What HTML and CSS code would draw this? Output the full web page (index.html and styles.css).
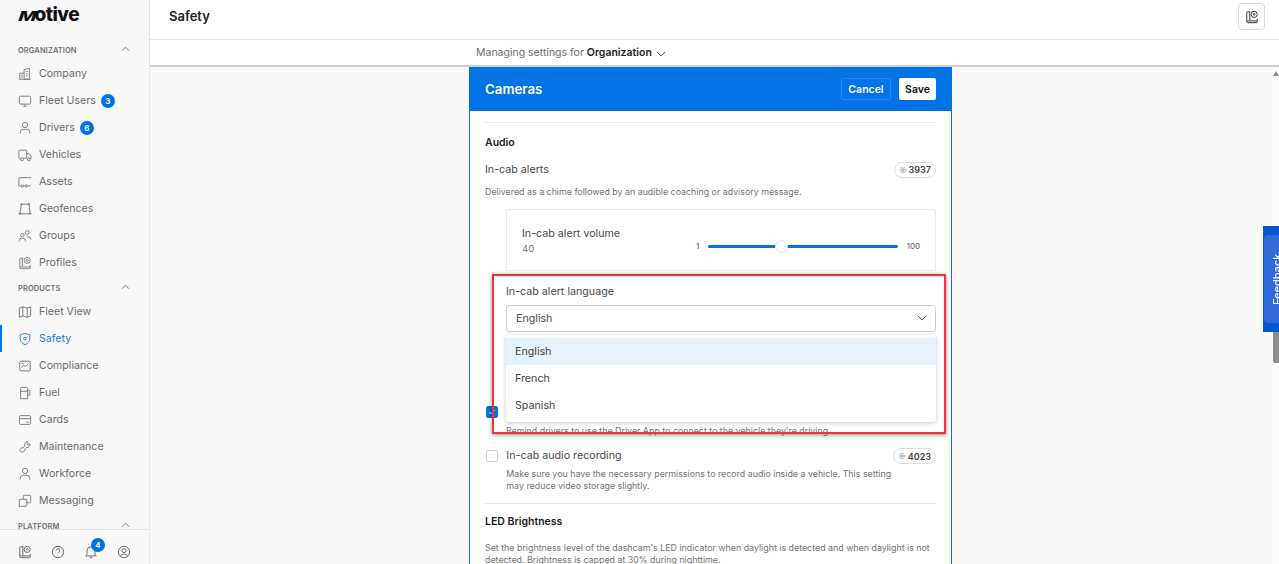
FILE: index.html
```html
<!DOCTYPE html>
<html lang="en">
<head>
<meta charset="utf-8">
<title>Safety</title>
<link rel="stylesheet" href="styles.css">
</head>
<body>
<div class="app">
  <aside class="sidebar">
    <div class="logo"><span class="logo-m">M</span>otive</div>
    <nav class="nav">
      <div class="nav-head"><span>Organization</span><svg class="chev" viewBox="0 0 10 6"><path d="M1 5l4-4 4 4"/></svg></div>
      <a class="nav-row"><svg class="ico" viewBox="0 0 16 16"><path d="M7 14V3l6-1.500V14zM2 14V7h5M1.500 14h13M9 5h2M9 7.500h2M9 10h2M3.500 9.500h2M3.500 11.500h2"/></svg>Company</a>
      <a class="nav-row"><svg class="ico" viewBox="0 0 16 16"><rect x="1.500" y="2.500" width="13" height="9" rx="1.500"/><path d="M6 14h4M8 11.500V14"/></svg>Fleet Users<span class="count">3</span></a>
      <a class="nav-row"><svg class="ico" viewBox="0 0 16 16"><circle cx="8" cy="4.500" r="3"/><path d="M2.500 14.500v-1.500a3.500 3.500 0 0 1 3.500-3.500h4a3.500 3.500 0 0 1 3.500 3.500v1.500"/></svg>Drivers<span class="count">6</span></a>
      <a class="nav-row"><svg class="ico" viewBox="0 0 16 16"><path d="M3 12.500H2a1 1 0 0 1-1-1v-8a1 1 0 0 1 1-1h7a1 1 0 0 1 1 1v8H6.500M10 6.500h2.500l2.500 3v2.500h-1M10 12.500h1"/><circle cx="4.700" cy="12.800" r="1.600"/><circle cx="12.500" cy="12.800" r="1.600"/></svg>Vehicles</a>
      <a class="nav-row"><svg class="ico" viewBox="0 0 16 16"><path d="M15 3H2a1 1 0 0 0-1 1v8.500h2M14.500 12.500H11M7.500 12.500h-1"/><circle cx="5" cy="12.500" r="1.400"/><circle cx="9.200" cy="12.500" r="1.400"/></svg>Assets</a>
      <a class="nav-row"><svg class="ico" viewBox="0 0 16 16"><path d="M4 2.500h8.500l1.500 11H2z"/><circle cx="4" cy="2.500" r=".8"/><circle cx="12.500" cy="2.500" r=".8"/><circle cx="2" cy="13.500" r=".8"/><circle cx="14" cy="13.500" r=".8"/></svg>Geofences</a>
      <a class="nav-row"><svg class="ico" viewBox="0 0 16 16"><circle cx="10.500" cy="4" r="2.200"/><circle cx="5" cy="7" r="2"/><path d="M1.500 14v-.8a2.800 2.800 0 0 1 2.800-2.700h1.400a2.800 2.800 0 0 1 2.800 2.700v.8M10 9h2a2.800 2.800 0 0 1 2.800 2.700v.5"/></svg>Groups</a>
      <a class="nav-row"><svg class="ico" viewBox="0 0 16 16"><path d="M6 2.500H3a1 1 0 0 0-1 1v10a1 1 0 0 0 1 1h10a1 1 0 0 0 1-1v-3M2.500 12.500H14M5 2.500v9"/><circle cx="10.500" cy="5" r="3.500"/><circle cx="10.500" cy="5" r="1.200"/></svg>Profiles</a>
      <div class="nav-head"><span>Products</span><svg class="chev" viewBox="0 0 10 6"><path d="M1 5l4-4 4 4"/></svg></div>
      <a class="nav-row"><svg class="ico" viewBox="0 0 16 16"><path d="M1.500 3.500l4-1.500 5 1.500 4-1.500v10.500l-4 1.500-5-1.500-4 1.500zM5.500 2v10.500M10.500 3.500V14"/></svg>Fleet View</a>
      <a class="nav-row is-active"><svg class="ico" viewBox="0 0 16 16"><path d="M8 1.500l5.500 1.700v4.300c0 3.300-2.300 5.700-5.500 7-3.200-1.300-5.500-3.700-5.500-7V3.200z"/><circle cx="8" cy="7.500" r="1.500"/></svg>Safety</a>
      <a class="nav-row"><svg class="ico" viewBox="0 0 16 16"><rect x="2" y="2.500" width="12" height="11" rx="1"/><path d="M4 10l2.500-3 2 1.500L12 5.500M4 5h2"/></svg>Compliance</a>
      <a class="nav-row"><svg class="ico" viewBox="0 0 16 16"><path d="M3 14.500V3a1.500 1.500 0 0 1 1.500-1.500h5A1.500 1.500 0 0 1 11 3v11.500zM3 6h8M11 5h1.500a1 1 0 0 1 1 1v3.500a1 1 0 0 1-1 1H11"/></svg>Fuel</a>
      <a class="nav-row"><svg class="ico" viewBox="0 0 16 16"><rect x="1.500" y="3" width="13" height="10" rx="1.500"/><path d="M1.500 6.500h13M9.500 10.500h3" /></svg>Cards</a>
      <a class="nav-row"><svg class="ico" viewBox="0 0 16 16"><path d="M9.500 2l2 .3-1.500 2 1.500 1.500 2-1.500.3 2-2.300 2.200H9.700L8 10.200v1.500L5.800 14 3 13.500 2 11l2.200-2.200h1.600L7.500 7V5z"/></svg>Maintenance</a>
      <a class="nav-row"><svg class="ico" viewBox="0 0 16 16"><circle cx="8" cy="4.500" r="3"/><path d="M2.500 14.500v-1.500a3.500 3.500 0 0 1 3.500-3.500h4a3.500 3.500 0 0 1 3.500 3.500v1.500"/></svg>Workforce</a>
      <a class="nav-row"><svg class="ico" viewBox="0 0 16 16"><path d="M6 6V2.500a1 1 0 0 1 1-1h6.500a1 1 0 0 1 1 1V9a1 1 0 0 1-1 1H10"/><path d="M2.500 6H9a1 1 0 0 1 1 1v6a1 1 0 0 1-1 1H3l-1.500 1V7a1 1 0 0 1 1-1z"/></svg>Messaging</a>
      <div class="nav-head"><span>Platform</span><svg class="chev" viewBox="0 0 10 6"><path d="M1 5l4-4 4 4"/></svg></div>
    </nav>
    <footer class="side-foot">
      <svg class="foot-ico" viewBox="0 0 16 16"><path d="M6 2H3a1 1 0 0 0-1 1v10.500a1 1 0 0 0 1 1h10a1 1 0 0 0 1-1V10M2.500 12.500H14M5.500 2v10"/><circle cx="10.500" cy="5" r="3.500"/><circle cx="10.500" cy="5" r="1"/></svg>
      <svg class="foot-ico" viewBox="0 0 16 16"><circle cx="8" cy="8" r="6.500"/><path d="M6 6.200a2 2 0 1 1 3 1.800c-.7.400-1 .8-1 1.500M8 11.300v.5"/></svg>
      <span class="bell"><svg class="foot-ico" viewBox="0 0 16 16"><path d="M2 12.500h12l-1.500-2V6.500a4.500 4.500 0 0 0-9 0v4zM6.500 14.500h3"/></svg><span class="bell-count">4</span></span>
      <svg class="foot-ico" viewBox="0 0 16 16"><circle cx="8" cy="8" r="6.500"/><circle cx="8" cy="6.500" r="2.300"/><path d="M3.800 13c.6-1.800 2.200-2.500 4.200-2.500s3.600.7 4.200 2.500"/></svg>
    </footer>
  </aside>

  <div class="main">
    <header class="topbar">
      <h1 class="title">Safety</h1>
      <button class="top-btn"><svg class="btn-ico" viewBox="0 0 16 16"><path d="M6 2H3a1 1 0 0 0-1 1v10.500a1 1 0 0 0 1 1h10a1 1 0 0 0 1-1V10M2.500 12.500H14M5.500 2v10"/><circle cx="10.500" cy="5" r="3.500"/><circle cx="10.500" cy="5" r="1"/></svg></button>
    </header>
    <div class="subbar">Managing settings for <strong class="org">Organization</strong><svg class="sub-chev" viewBox="0 0 10 6"><path d="M1 1l4 4 4-4"/></svg></div>
    <div class="workspace">
      <div class="scroll-area">
        <section class="card">
          <div class="card-head">
            <h2 class="card-title">Cameras</h2>
            <button class="btn btn-ghost">Cancel</button>
            <button class="btn btn-white">Save</button>
          </div>
          <div class="card-body">
            <hr class="rule rule-top">
            <h3 class="sec-title audio-title">Audio</h3>
            <div class="setting-head">
              <span class="setting-label">In-cab alerts</span>
              <span class="pill"><svg class="gear" viewBox="0 0 10 10"><circle cx="5" cy="5" r="1.600"/><circle cx="5" cy="5" r="3.600" stroke-dasharray="1.400 .9"/></svg>3937</span>
            </div>
            <p class="desc alerts-desc">Delivered as a chime followed by an audible coaching or advisory message.</p>
            <div class="indent">
              <div class="volume-box">
                <div class="vol-text">
                  <div class="setting-label">In-cab alert volume</div>
                  <div class="vol-value">40</div>
                </div>
                <div class="slider">
                  <span class="slider-end">1</span>
                  <span class="track"><span class="knob"></span></span>
                  <span class="slider-end">100</span>
                </div>
              </div>
              <div class="lang-field">
                <div class="setting-label">In-cab alert language</div>
                <div class="select">English<svg class="sel-chev" viewBox="0 0 10 6"><path d="M1 1l4 4 4-4"/></svg>
                  <ul class="menu">
                    <li class="menu-item is-selected">English</li>
                    <li class="menu-item">French</li>
                    <li class="menu-item">Spanish</li>
                  </ul>
                </div>
              </div>
            </div>
            <div class="check-row reminder">
              <span class="check is-on"><svg viewBox="0 0 12 12"><path d="M3 6l2.200 2.200L9 4"/></svg></span>
              <p class="desc">Remind drivers to use the Driver App to connect to the vehicle they're driving.</p>
            </div>
            <div class="check-row recording">
              <span class="check"></span>
              <div class="rec-text">
                <div class="setting-label">In-cab audio recording</div>
                <p class="desc rec-desc">Make sure you have the necessary permissions to record audio inside a vehicle. This setting may reduce video storage slightly.</p>
              </div>
              <span class="pill"><svg class="gear" viewBox="0 0 10 10"><circle cx="5" cy="5" r="1.600"/><circle cx="5" cy="5" r="3.600" stroke-dasharray="1.400 .9"/></svg>4023</span>
            </div>
            <hr class="rule rule-mid">
            <h3 class="sec-title led-title">LED Brightness</h3>
            <p class="desc led-desc">Set the brightness level of the dashcam's LED indicator when daylight is detected and when daylight is not detected. Brightness is capped at 30% during nighttime.</p>
          </div>
          <div class="annotation"></div>
        </section>
      </div>
      <div class="scrollbar"><span class="arrow"></span><span class="thumb"></span></div>
      <div class="feedback"><span class="feedback-inner"><span class="feedback-text">Feedback</span></span></div>
    </div>
  </div>
</div>
</body>
</html>
```
FILE: styles.css
```css
* { box-sizing: border-box; }
html, body { margin: 0; height: 100%; overflow: hidden; }
body { font-family: Inter, "Liberation Sans", sans-serif; color: #2a2a2a; background: #f8f8f8; font-size: 11px; }
h1, h2, h3, p, ul { margin: 0; padding: 0; }
button { font-family: inherit; }

.app { display: flex; height: 564px; filter: blur(.3px); }

.sidebar { width: 150px; flex: none; display: flex; flex-direction: column; background: #f8f8f8; border-right: 1px solid #e6e6e6; }
.logo { height: 38px; padding: 3px 0 0 18px; font-size: 19px; line-height: 24px; font-weight: 800; color: #111; letter-spacing: -.5px; }
.logo-m { display: inline-block; transform: skewX(-18deg) scaleY(.72); transform-origin: 0 80%; font-size: 19px; margin-left: -1px; margin-right: 0; }
.nav { flex: 1; overflow: hidden; min-height: 0; }
.nav-head { height: 22px; padding: 2px 19px 0 18px; display: flex; align-items: center; justify-content: space-between; font-size: 7.500px; font-weight: 600; letter-spacing: .1px; text-transform: uppercase; color: #707070; }
.chev { width: 9px; height: 6px; margin-top: -3px; fill: none; stroke: #777; stroke-width: 1; }
.nav-row { height: 27px; padding-left: 18px; display: flex; align-items: center; gap: 7px; font-size: 10.600px; color: #6a6a6a; position: relative; }
.ico { width: 14px; height: 14px; flex: none; fill: none; stroke: #737373; stroke-width: 1; }
.count { width: 14px; height: 14px; margin-left: -2px; border-radius: 50%; background: #0073e6; color: #fff; font-size: 8px; font-weight: 700; display: flex; align-items: center; justify-content: center; }
.is-active { color: #1f75e0; box-shadow: inset 2px 0 0 #0073e6; }
.is-active .ico { stroke: #1f75e0; }
.side-foot { height: 35px; flex: none; border-top: 1px solid #e2e2e2; padding: 10px 18px 0 18px; display: flex; align-items: center; justify-content: space-between; }
.foot-ico { width: 14px; height: 14px; fill: none; stroke: #666; stroke-width: 1.100; display: block; }
.bell { position: relative; }
.bell-count { position: absolute; top: -7px; left: 7px; width: 14px; height: 14px; border-radius: 50%; background: #0073e6; color: #fff; font-size: 8px; font-weight: 700; display: flex; align-items: center; justify-content: center; }

.main { flex: 1; min-width: 0; display: flex; flex-direction: column; }
.topbar { height: 40px; flex: none; background: #fff; border-bottom: 1px solid #e6e6e6; display: flex; align-items: flex-start; justify-content: space-between; padding: 3px 14px 0 19px; }
.title { font-size: 13px; line-height: 27px; font-weight: 600; color: #222; }
.top-btn { width: 27px; height: 27px; padding: 0; background: #fff; border: 1px solid #d8d8d8; border-radius: 4px; display: flex; align-items: center; justify-content: center; }
.btn-ico { width: 14px; height: 14px; fill: none; stroke: #333; stroke-width: 1.100; }
.subbar { height: 27px; flex: none; background: #fff; border-bottom: 2px solid #cfcfcf; padding-left: 326px; display: flex; align-items: center; white-space: pre; font-size: 10.500px; color: #6e6e6e; }
.org { color: #222; font-weight: 600; }
.sub-chev { width: 10px; height: 6px; margin-left: 4px; margin-top: 2px; fill: none; stroke: #555; stroke-width: 1; }

.workspace { flex: 1; min-height: 0; display: flex; position: relative; }
.scroll-area { flex: 1; min-width: 0; overflow: hidden; display: flex; justify-content: center; }
.card { width: 483px; flex: none; position: relative; height: max-content; background: #fff; border: 1px solid #0073e6; border-top: 0; }
.card-head { height: 44px; background: #0073e6; display: flex; align-items: center; gap: 8px; padding: 0 15px; }
.card-title { flex: 1; font-size: 13.300px; font-weight: 600; color: #fff; margin-top: -1px; }
.btn { height: 22px; border-radius: 2px; padding: 0; font-size: 10.500px; font-weight: 600; }
.btn-ghost { width: 50px; background: #0073e6; color: #fff; border: 1px solid #2a88ea; }
.btn-white { width: 37px; background: #fff; color: #111; border: 0; }
.card-body { padding: 11px 15px 0; }
.rule { border: 0; border-top: 1px solid #e6e6e6; margin: 0; }
.sec-title { font-size: 10.500px; line-height: 16px; font-weight: 600; color: #1d1d1d; }
.audio-title { margin-top: 12px; }
.setting-head { display: flex; justify-content: space-between; align-items: center; margin-top: 10px; height: 17px; }
.setting-label { font-size: 10.700px; line-height: 16px; color: #4a4a4a; }
.pill { height: 16px; padding: 0 4px; border: 1px solid #dcdcdc; border-radius: 8px; display: inline-flex; align-items: center; gap: 2px; font-size: 9px; font-weight: 600; color: #444; background: #fff; flex: none; }
.gear { width: 8px; height: 8px; fill: none; stroke: #777; stroke-width: .9; }
.desc { font-size: 8.860px; line-height: 12px; color: #737373; }
.alerts-desc { margin-top: 7px; line-height: 14px; }
.indent { margin: 10px 0 0 21px; }
.volume-box { height: 62px; border: 1px solid #e8e8e8; border-radius: 3px 3px 0 0; border-bottom-color: #efefef; padding: 16px 15px 0; display: flex; justify-content: space-between; }
.vol-value { font-size: 9.500px; line-height: 14px; color: #777; }
.slider { width: 224px; height: 12px; margin-top: 14px; display: flex; align-items: center; gap: 9px; }
.slider-end { font-size: 8px; color: #555; }
.track { flex: 1; height: 3px; border-radius: 2px; background: #0073e6; position: relative; }
.knob { position: absolute; left: 67px; top: -5px; width: 13px; height: 13px; border-radius: 50%; background: #fff; border: 1px solid #e2e2e2; }
.lang-field { margin-top: 13px; }
.select { position: relative; height: 27px; margin-top: 5px; border: 1px solid #cfcfcf; border-radius: 3px; padding-left: 9px; padding-bottom: 1px; display: flex; align-items: center; justify-content: space-between; font-size: 10.700px; color: #4a4a4a; background: #fff; }
.sel-chev { width: 10px; height: 6px; margin-right: 8px; fill: none; stroke: #555; stroke-width: 1; }
.menu { position: absolute; top: 29px; left: -1px; right: -1px; list-style: none; padding: 3px 0; background: #fff; border-radius: 3px; box-shadow: 0 1px 5px rgba(0, 0, 0, .22); }
.menu-item { height: 27px; padding-left: 9px; display: flex; align-items: center; font-size: 10.700px; color: #444; }
.is-selected { background: #e6f2fd; }
.check-row { display: flex; }
.check { width: 12px; height: 12px; flex: none; margin: 0 8px 0 1px; border: 1px solid #cfcfcf; border-radius: 2px; background: #fff; }
.check.is-on { background: #0073e6; border-color: #0073e6; }
.check svg { display: block; width: 10px; height: 10px; fill: none; stroke: #fff; stroke-width: 1.200; }
.reminder { margin-top: 74px; align-items: flex-start; }
.reminder .desc { margin-top: 19px; }
.recording { margin-top: 11px; align-items: flex-start; justify-content: space-between; }
.recording .check { margin-top: 2px; }
.rec-text { flex: none; width: 386px; }
.rec-desc { margin-top: 4px; }
.rule-mid { margin-top: 11px; }
.led-title { margin-top: 10px; }
.led-desc { margin-top: 12px; }
.annotation { position: absolute; left: 22px; top: 207px; width: 454px; height: 160px; border: 2px solid #e8383e; box-shadow: 0 1px 4px rgba(0, 0, 0, .45), inset 0 1px 2px rgba(0, 0, 0, .15); pointer-events: none; }

.scrollbar { width: 8px; flex: none; background: #fbfbfb; display: flex; flex-direction: column; align-items: flex-end; }
.arrow { width: 0; height: 0; margin: 4px 0 0; border-left: 3px solid transparent; border-right: 3px solid transparent; border-bottom: 5px solid #8a8a8a; }
.thumb { width: 6px; height: 70px; margin-top: 217px; border-radius: 2px 0 0 2px; background: #8e8e8e; }
.feedback { position: absolute; right: 0; top: 159px; width: 16px; height: 106px; background: #0558d2; overflow: hidden; padding: 9px 0 0 1px; }
.feedback-inner { display: block; width: 30px; height: 88px; border-radius: 4px; background: #3168d8; }
.feedback-text { display: block; writing-mode: vertical-rl; transform: rotate(180deg); color: #fff; font-size: 11px; font-weight: 500; height: 88px; width: 12px; margin-left: 7px; text-align: center; line-height: 12px; }
```
